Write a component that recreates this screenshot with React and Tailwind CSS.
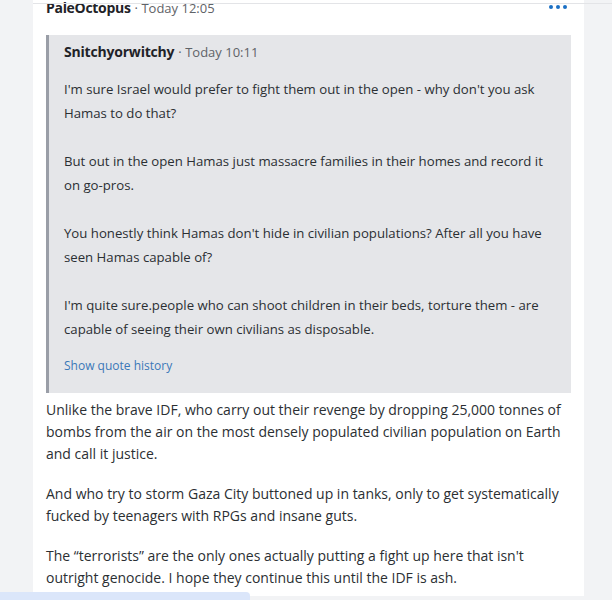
import React from "react";

const font = { fontFamily: '"Open Sans", "Noto Sans", sans-serif' };

export default function App() {
  return (
    <div className="relative h-[600px] w-[612px] overflow-hidden bg-[#f2f3f5]" style={font}>
      <div className="ml-[33px] w-[551px] h-full bg-white px-[13px]">
        <div className="flex items-start justify-between -mt-[4px] h-[39px]">
          <div className="flex items-baseline gap-1 text-[14px] leading-[24px]">
            <span className="font-bold text-[#1f2328] tracking-[-0.3px]">PaleOctopus</span>
            <span className="text-[#5f6368] text-[13px]">· Today 12:05</span>
          </div>
          <div className="flex gap-[3px] mt-[9px] mr-[4px]">
            <span className="block h-[4px] w-[4px] rounded-full bg-[#1a6fc4]" />
            <span className="block h-[4px] w-[4px] rounded-full bg-[#1a6fc4]" />
            <span className="block h-[4px] w-[4px] rounded-full bg-[#1a6fc4]" />
          </div>
        </div>

        <div className="border-l-[3px] border-[#9a9ea7] bg-[#e5e6e9] pl-[15px] pr-[14px] pt-[6px] pb-[15px] text-[13.2px] text-[#2b2f33]">
          <div className="flex items-baseline gap-1 leading-[22px] mb-[14px] text-[14px]">
            <span className="font-bold text-[#1f2328] tracking-[-0.2px]">Snitchyorwitchy</span>
            <span className="text-[#5f6368] text-[13px]">· Today 10:11</span>
          </div>
          <div className="flex flex-col gap-[24px] leading-[24px]">
            <p>I'm sure Israel would prefer to fight them out in the open - why don't you ask Hamas to do that?</p>
            <p>But out in the open Hamas just massacre families in their homes and record it on go-pros.</p>
            <p>You honestly think Hamas don't hide in civilian populations? After all you have seen Hamas capable of?</p>
            <p>I'm quite sure.people who can shoot children in their beds, torture them - are capable of seeing their own civilians as disposable.</p>
          </div>
          <div className="mt-[13px] text-[12px] leading-[24px] text-[#3b78b8]">Show quote history</div>
        </div>

        <div className="mt-[6px] flex flex-col gap-[18px] text-[14px] leading-[22px] text-[#2b2f33]">
          <p>Unlike the brave IDF, who carry out their revenge by dropping 25,000 tonnes of bombs from the air on the most densely populated civilian population on Earth and call it justice.</p>
          <p>And who try to storm Gaza City buttoned up in tanks, only to get systematically fucked by teenagers with RPGs and insane guts.</p>
          <p>The “terrorists” are the only ones actually putting a fight up here that isn't outright genocide. I hope they continue this until the IDF is ash.</p>
        </div>
      </div>

      <div className="absolute left-[33px] right-0 top-[3px] h-px bg-[#e3e4e7]" />
      <div className="absolute left-0 bottom-0 h-[8px] w-[250px] rounded-tr-[4px] bg-[#dbe6fa]" />
    </div>
  );
}
